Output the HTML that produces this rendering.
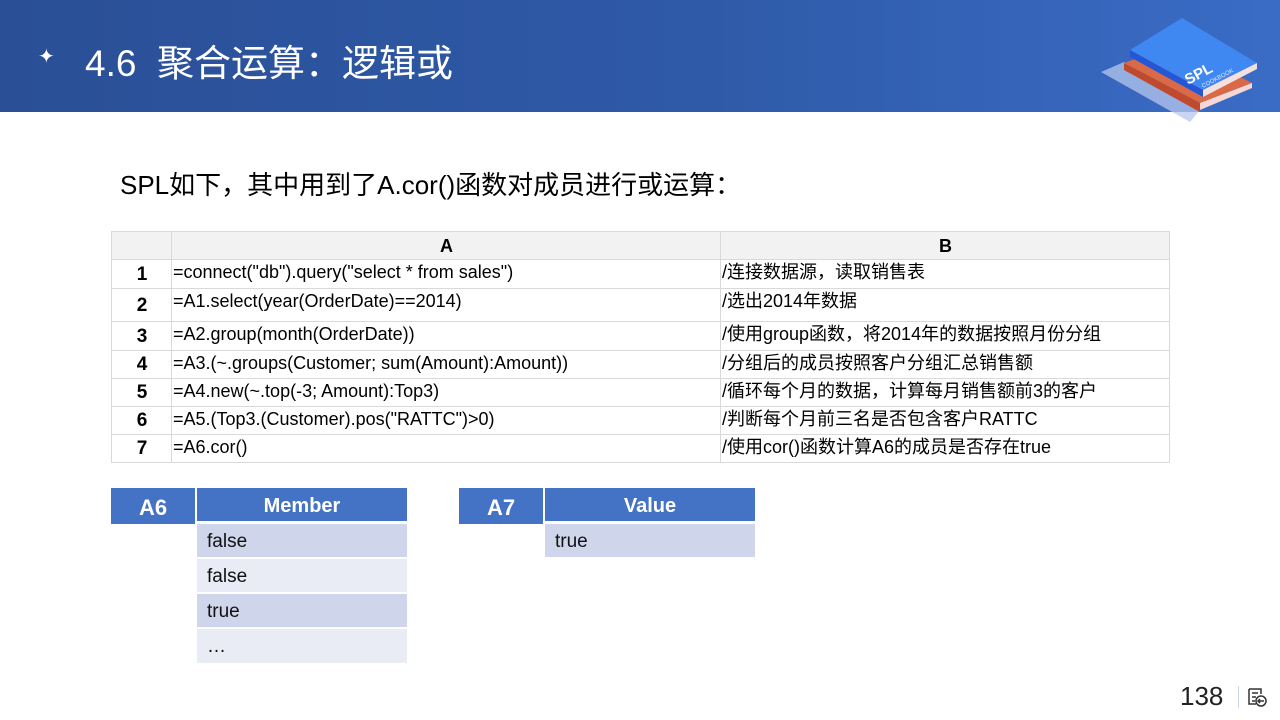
<!DOCTYPE html>
<html><head><meta charset="utf-8"><style>
*{margin:0;padding:0;box-sizing:border-box}
body{width:1280px;height:720px;position:relative;background:#fff;font-family:"Liberation Sans","Noto Sans CJK SC",sans-serif;overflow:hidden}
.hdr{position:absolute;left:0;top:0;width:1280px;height:112px;background:linear-gradient(90deg,#2a4f96 0%,#2f5aa8 55%,#3a6cc6 100%)}
.t{position:absolute;color:#fff;font-size:37px;top:33px;left:85px;white-space:nowrap}
.c{position:absolute;font-size:18px;color:#000;white-space:nowrap;line-height:1}
table{position:absolute;left:111px;top:231px;border-collapse:collapse;font-family:"Liberation Sans","Noto Sans CJK SC",sans-serif}
td{border:1px solid #d9d9d9;font-size:18px;padding:1px 0 0 1px;vertical-align:top;white-space:nowrap;line-height:22px}
td.n{text-align:center;font-weight:bold;vertical-align:middle;background:#fff;font-size:19px}
tr.h td{background:#f2f2f2;font-weight:bold;text-align:center;vertical-align:middle}
.b{position:absolute;font-size:19px;color:#111;padding-left:10px;line-height:35px;height:33px}
.bh{position:absolute;background:#4472c4;color:#fff;font-weight:bold;text-align:center;font-size:20px}
</style></head><body>
<div class="hdr"></div>
<div style="position:absolute;left:38px;top:44px;color:#fff;font-size:20px">✦</div>
<div class="t">4.6&nbsp; 聚合运算：逻辑或</div>
<svg style="position:absolute;left:1090px;top:0" width="190" height="125" viewBox="1090 0 190 125">
<polygon points="1101,72 1124,62 1200,110 1190,122" fill="#b7c7ee" opacity="0.75"/>
<polygon points="1124,63 1176,44 1252,83 1200,103" fill="#d96a48"/>
<polygon points="1124,63 1124,70 1200,112 1200,103" fill="#bf4a2e"/>
<polygon points="1200,103 1252,83 1252,88 1200,110" fill="#f7d6d6"/>
<polygon points="1130,50 1182,18 1257,63 1203,90" fill="#3f88f2"/>
<polygon points="1130,50 1130,57 1203,97 1203,90" fill="#2457d6"/>
<polygon points="1203,90 1257,63 1257,69 1203,97" fill="#f5e0e0"/>
<text x="1188" y="85" fill="#fff" font-size="15" font-weight="bold" transform="rotate(-28 1188 85)" font-family="Liberation Sans">SPL</text>
<text x="1203" y="88" fill="#dfe8ff" font-size="6" transform="rotate(-28 1203 88)" font-family="Liberation Sans">COOKBOOK</text>
</svg>
<div class="c" style="left:120px;top:172px;font-size:26px">SPL如下，其中用到了A.cor()函数对成员进行或运算：</div>
<table>
<colgroup><col style="width:60px"><col style="width:549px"><col style="width:449px"></colgroup>
<tr class="h" style="height:28px"><td></td><td>A</td><td>B</td></tr>
<tr style="height:29px"><td class="n">1</td><td>=connect("db").query("select * from sales")</td><td>/连接数据源，读取销售表</td></tr>
<tr style="height:33px"><td class="n">2</td><td>=A1.select(year(OrderDate)==2014)</td><td>/选出2014年数据</td></tr>
<tr style="height:29px"><td class="n">3</td><td>=A2.group(month(OrderDate))</td><td>/使用group函数，将2014年的数据按照月份分组</td></tr>
<tr style="height:28px"><td class="n">4</td><td>=A3.(~.groups(Customer; sum(Amount):Amount))</td><td>/分组后的成员按照客户分组汇总销售额</td></tr>
<tr style="height:28px"><td class="n">5</td><td>=A4.new(~.top(-3; Amount):Top3)</td><td>/循环每个月的数据，计算每月销售额前3的客户</td></tr>
<tr style="height:28px"><td class="n">6</td><td>=A5.(Top3.(Customer).pos("RATTC")>0)</td><td>/判断每个月前三名是否包含客户RATTC</td></tr>
<tr style="height:28px"><td class="n">7</td><td>=A6.cor()</td><td>/使用cor()函数计算A6的成员是否存在true</td></tr>
</table>
<div class="bh" style="left:111px;top:488px;width:84px;height:36px;line-height:40px;font-size:22px">A6</div>
<div class="bh" style="left:197px;top:488px;width:210px;height:33px;line-height:37px">Member</div>
<div class="b" style="left:197px;top:524px;width:210px;background:#cfd5ea">false</div>
<div class="b" style="left:197px;top:559px;width:210px;background:#e9ebf5">false</div>
<div class="b" style="left:197px;top:594px;width:210px;background:#cfd5ea">true</div>
<div class="b" style="left:197px;top:629px;width:210px;background:#e9ebf5;height:34px">…</div>
<div class="bh" style="left:459px;top:488px;width:84px;height:36px;line-height:40px;font-size:22px">A7</div>
<div class="bh" style="left:545px;top:488px;width:210px;height:33px;line-height:37px">Value</div>
<div class="b" style="left:545px;top:524px;width:210px;background:#cfd5ea">true</div>
<div class="c" style="left:1180px;top:683px;font-size:26px;color:#222">138</div>
<div style="position:absolute;left:1238px;top:686px;width:1px;height:22px;background:#c8d4ea"></div>
<svg style="position:absolute;left:1246px;top:686px" width="22" height="22" viewBox="0 0 22 22" fill="none" stroke="#333" stroke-width="1.5">
<path d="M3 3h12v5M3 3v15h7M6 7h6M6 11h4M6 15h3"/><circle cx="15" cy="15" r="5"/><path d="M18 15h-6M14 13l-2 2 2 2"/>
</svg>
</body></html>
